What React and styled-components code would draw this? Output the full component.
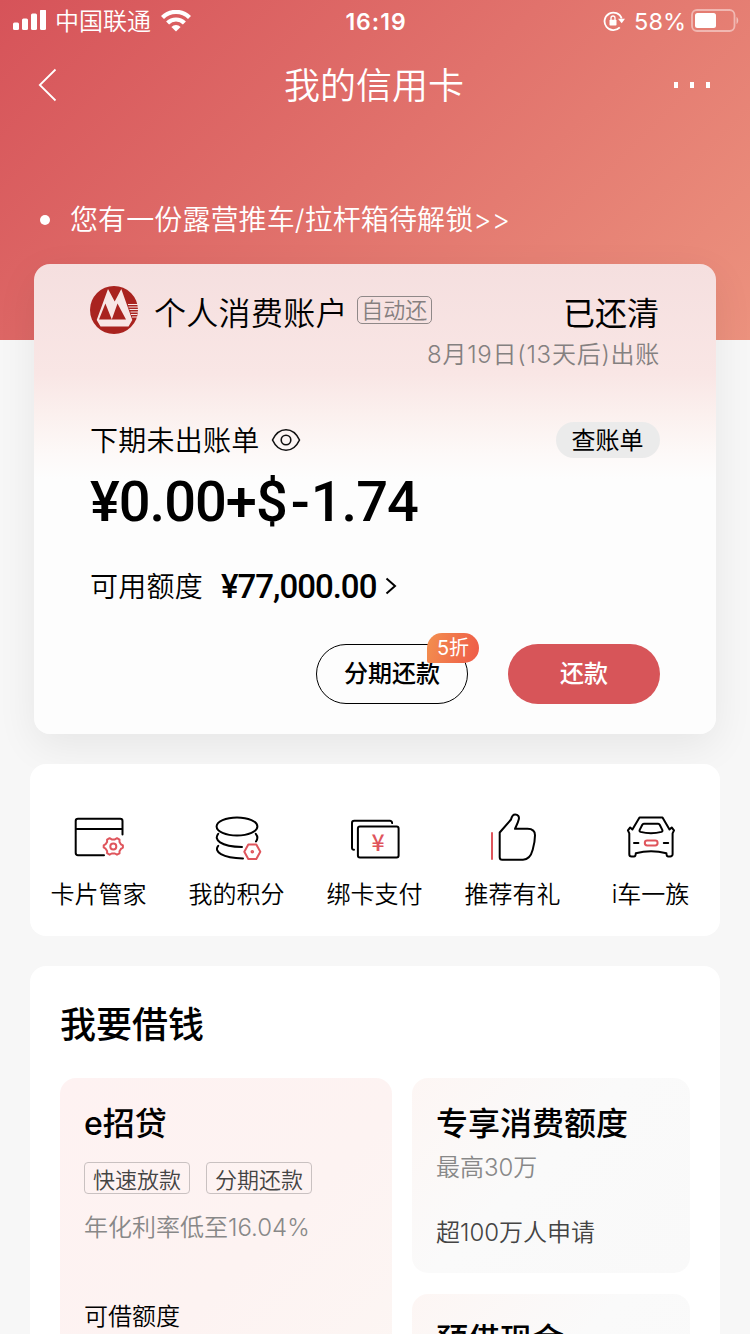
import React from 'react'
import styled, { createGlobalStyle } from 'styled-components'

const GlobalStyle = createGlobalStyle`
    * {
        box-sizing: border-box;
    }
    body {
        margin: 0;
        background: #f7f7f7;
        font-family: Inter, "Noto Sans CJK SC", sans-serif;
        color: #000;
    }
    svg {
        display: block;
        flex: none;
    }
`;

const PageStyled = styled.div`
    width: 750px;
    height: 1334px;
    overflow: hidden;
    background: linear-gradient(135deg, #d65359 0%, #e1726c 50%, #ec927e 100%) no-repeat 0 0 / 100% 340px, #f7f7f7;
`;
const StatusBarStyled = styled.div`
    display: grid;
    grid-template-columns: 1fr auto 1fr;
    height: 40px;
    padding: 0 11px 0 13px;
    align-items: center;
    color: #fff;
`;
const StatusSideStyled = styled.div`
    display: flex;
    align-items: center;
    justify-content: ${({ $end }) => $end ? 'flex-end' : 'flex-start'};
    .carrier {
        margin: 2px 10px 0 9px;
        font-size: 24px;
        line-height: 40px;
        font-weight: 350;
    }
    .percent {
        margin: 1px 5px 0 9px;
        font-size: 23.5px;
        line-height: 40px;
    }
`;
const ClockStyled = styled.div`
    padding-top: 1px;
    font-size: 23px;
    line-height: 40px;
    font-weight: 600;
    letter-spacing: 1px;
`;
const NavBarStyled = styled.div`
    display: grid;
    grid-template-columns: 1fr auto 1fr;
    height: 90px;
    padding: 0 40px 0 38px;
    align-items: center;
    h1 {
        margin: 2px 0 0;
        font-size: 36px;
        line-height: 88px;
        font-weight: 350;
        color: #fff;
    }
`;
const MoreDotsStyled = styled.div`
    display: flex;
    justify-content: flex-end;
    gap: 12px;
    i {
        width: 4px;
        height: 6px;
        background: #fff;
    }
`;
const NoticeStyled = styled.div`
    display: flex;
    height: 134px;
    padding: 46px 0 0 40px;
    align-items: center;
    font-size: 28px;
    line-height: 40px;
    font-weight: 350;
    letter-spacing: 0.1px;
    color: #fff;
    &::before {
        content: '';
        width: 10px;
        height: 10px;
        margin-right: 20px;
        border-radius: 50%;
        background: #fff;
    }
`;

const AccountCardStyled = styled.section`
    height: 470px;
    margin: 0 34px;
    padding: 22px 56px 0;
    border-radius: 16px;
    background: linear-gradient(180deg, #f5dfdf 0, #f9e6e5 110px, #fbf0ee 150px, #fdf9f8 190px, #fdfdfd 215px);
    box-shadow: 0 12px 40px rgba(0, 0, 0, 0.07);
`;
const RowStyled = styled.div`
    display: flex;
    height: ${({ $height }) => $height}px;
    margin-top: ${({ $top }) => $top || 0}px;
    align-items: center;
    justify-content: ${({ $justify }) => $justify || 'flex-start'};
    gap: ${({ $gap }) => $gap || 0}px;
`;
const AccountNameStyled = styled.div`
    margin: 8px 0 0 16px;
    font-size: 32px;
    line-height: 48px;
    font-weight: 350;
    letter-spacing: 0.3px;
`;
const AutoTagStyled = styled.div`
    width: 75px;
    height: 28px;
    margin-left: 9px;
    border: 1px solid #8f8888;
    border-radius: 5px;
    font-size: 22px;
    line-height: 27px;
    font-weight: 350;
    text-align: center;
    color: #857f7f;
`;
const PaidStateStyled = styled.div`
    margin: 8px 1px 0 auto;
    font-size: 32px;
    line-height: 48px;
`;
const BillDateStyled = styled.div`
    padding-top: 2px;
    font-size: 24px;
    font-weight: 350;
    line-height: 40px;
    letter-spacing: 0.75px;
    color: #848080;
`;
const LabelStyled = styled.div`
    margin-top: 2px;
    font-size: 28px;
    line-height: 40px;
    font-weight: 350;
    letter-spacing: 0.25px;
`;
const BillButtonStyled = styled.button`
    width: 104px;
    height: 36px;
    margin-left: auto;
    padding: 1px 1px 0 0;
    border: 0;
    border-radius: 18px;
    background: #ebebeb;
    font: inherit;
    font-size: 24px;
    line-height: 35px;
    color: #000;
`;
const AmountStyled = styled.div`
    font-family: Roboto, sans-serif;
    font-size: 56px;
    line-height: 60px;
    font-weight: 500;
    letter-spacing: -1px;
    .minus {
        margin: 0 2px 0 4px;
    }
`;
const LimitStyled = styled(AmountStyled)`
    margin: 2px 9px 0 18px;
    font-size: 33px;
`;
const ActionButtonStyled = styled.button`
    position: relative;
    width: 152px;
    height: 60px;
    padding: 0;
    border: ${({ $primary }) => $primary ? '0' : '1px solid #000'};
    border-radius: 30px;
    background: ${({ $primary }) => $primary ? '#d75559' : 'transparent'};
    font: inherit;
    font-size: 24px;
    line-height: 58px;
    font-weight: 500;
    color: ${({ $primary }) => $primary ? '#fff' : '#000'};
`;
const DiscountStyled = styled.span`
    position: absolute;
    top: -12px;
    right: -12px;
    width: 52px;
    height: 30px;
    border-radius: 15px 15px 15px 2px;
    background: linear-gradient(105deg, #f3904f, #ee5a48);
    font-size: 20px;
    line-height: 31px;
    font-weight: 400;
    color: #fff;
`;

const MenuStyled = styled.nav`
    display: grid;
    grid-template-columns: repeat(5, 138px);
    height: 172px;
    margin: 30px 30px 0;
    padding-top: 46px;
    border-radius: 16px;
    background: #fff;
`;
const MenuItemStyled = styled.div`
    display: flex;
    flex-direction: column;
    align-items: center;
    font-size: 24px;
    line-height: 36px;
    font-weight: 350;
    span {
        margin: 11px 1px 0 0;
    }
`;

const LoanSectionStyled = styled.section`
    margin: 30px 30px 0;
    padding: 32px 30px 0;
    border-radius: 16px;
    background: #fff;
    h2 {
        height: 80px;
        margin: 0;
        font-size: 36px;
        line-height: 54px;
        font-weight: 500;
    }
`;
const LoanGridStyled = styled.div`
    display: grid;
    grid-template-columns: 332px 278px;
    column-gap: 20px;
    height: 400px;
`;
const LoanColumnStyled = styled.div`
    display: flex;
    flex-direction: column;
    gap: 21px;
`;
const LoanPanelStyled = styled.div`
    height: ${({ $tall }) => $tall ? 400 : 195}px;
    padding: 22px 24px 0;
    border-radius: 16px;
    background: ${({ $tall }) => $tall
        ? 'linear-gradient(135deg, #fef2f2 0%, #fdf3f2 50%, #fcf7f4 100%)'
        : 'linear-gradient(135deg, #fdf6f4 0%, #fafafa 45%, #f9f9f9 100%)'};
    h3 {
        height: 46px;
        margin: 0;
        font-size: 32px;
        line-height: 47px;
        font-weight: 500;
    }
`;
const LoanTextStyled = styled.div`
    margin-top: ${({ $top }) => $top || 0}px;
    font-size: 24px;
    line-height: 36px;
    font-weight: 350;
    color: ${({ $color }) => $color || '#444'};
`;
const TagListStyled = styled.div`
    display: flex;
    margin-top: 16px;
    gap: 16px;
    span {
        width: 106px;
        height: 32px;
        border: 1px solid #c9c1c1;
        border-radius: 4px;
        font-size: 22px;
        line-height: 34px;
        font-weight: 350;
        text-align: center;
        color: #444;
    }
`;

function SignalIcon() {
    return <svg width="33" height="22" viewBox="0 0 33 22" fill="#fff">
        <rect x="0" y="12.5" width="6" height="7.5" rx="1.5" />
        <rect x="9" y="8.5" width="6" height="11.5" rx="1.5" />
        <rect x="18" y="3.5" width="6" height="16.5" rx="1.5" />
        <rect x="27" y="-0.5" width="6" height="20.5" rx="1.5" />
    </svg>
}

function WifiIcon() {
    return <svg width="30" height="22" viewBox="0 0 30 22" fill="none" stroke="#fff" strokeWidth="4.2">
        <path d="M1.500 7.500a19 19 0 0 1 27 0" />
        <path d="M6.600 13a11.800 11.800 0 0 1 16.800 0" />
        <path d="M15 21.500l-4.600-4.600a6.500 6.500 0 0 1 9.200 0z" fill="#fff" stroke="none" />
    </svg>
}

function RotationLockIcon() {
    return <svg width="22" height="22" viewBox="0 0 22 22" fill="none" stroke="#fff" strokeWidth="1.8">
        <path d="M16.800 17.400A8.800 8.800 0 1 1 18.700 8.500" />
        <path d="M15 8.800h7l-3.300 4.400z" fill="#fff" stroke="none" />
        <rect x="6.500" y="9.700" width="7" height="5.800" rx="0.800" fill="#fff" stroke="none" />
        <path d="M8 10.500V8a2 2 0 0 1 4 0v2.500" strokeWidth="1.300" />
    </svg>
}

function BatteryIcon() {
    return <svg width="48" height="24" viewBox="0 0 48 24" fill="none">
        <rect x="1" y="1" width="42.500" height="21" rx="5" stroke="#fff" strokeOpacity="0.450" strokeWidth="1.800" />
        <rect x="4" y="4" width="21" height="15" rx="2.500" fill="#fff" />
        <path d="M45.500 8c2.300 1.200 2.300 5.800 0 7z" fill="#fff" fillOpacity="0.500" />
    </svg>
}

function BankLogo() {
    return <svg width="48" height="48" viewBox="0 0 48 48">
        <circle cx="24" cy="24" r="24" fill="#a9231f" />
        <path d="M18 3L24.700 15.500 31.300 3 42.300 34 38.500 40.500H10.500L6.700 34z" fill="#f8e6e5" />
        <path d="M15.400 17.500L21.800 33.500H9zM27.500 17.500L36 33.500H21.800z" fill="#a9231f" />
        <path d="M38 18.500h10M38.500 21h9.500M39.500 23.500h8.500M40.500 26h7.500M41 28.500h6.500M42 31h5" stroke="#f8e6e5" strokeWidth="1.200" />
    </svg>
}

const EyeIconStyled = styled.svg`
    margin-left: 11px;
`;

function EyeIcon() {
    return <EyeIconStyled width="30" height="24" viewBox="0 0 30 24" fill="none" stroke="#111" strokeWidth="1.6">
        <path d="M1.500 12C4.500 5.500 9 1.700 15 1.700S25.500 5.500 28.500 12C25.500 18.500 21 22.300 15 22.300S4.500 18.500 1.500 12z" />
        <circle cx="15" cy="12" r="4.800" />
    </EyeIconStyled>
}

const MenuIcon = styled.svg.attrs({ viewBox: '0 0 60 56', fill: 'none', strokeWidth: 2, strokeLinecap: 'round', strokeLinejoin: 'round' })`
    width: 60px;
    height: 56px;
    stroke: #000;
    .accent {
        stroke: #df555c;
    }
    text {
        stroke: none;
        fill: #df555c;
        font-family: "Noto Sans CJK SC", sans-serif;
        font-size: 23px;
        font-weight: 500;
        text-anchor: middle;
    }
`;

function CardIcon() {
    return <MenuIcon>
        <path d="M53.500 24.500V11a2.300 2.300 0 0 0-2.300-2.300H9A2.300 2.300 0 0 0 6.700 11v32A2.300 2.300 0 0 0 9 45.200h26M7 19h46" />
        <path className="accent" d="M40.600 28.200l2.100 1.200h3.200l2.100-1.200 2.500 1.500v2.300l1.400 2.300 2 1.100v2.200l-2 1.300-1.400 2.300v2.200L48 44.700l-2.100-1.200h-3.200l-2.100 1.200-2.500-1.500V41l-1.500-2.300-1.900-1.200v-2.200l1.900-1.100 1.500-2.300v-2.300z" />
        <circle className="accent" cx="44.300" cy="36.400" r="3" />
    </MenuIcon>
}

function PointsIcon() {
    return <MenuIcon>
        <ellipse cx="30" cy="16.500" rx="20.400" ry="9" />
        <path d="M11.200 23.800C6.500 29.500 13 36.500 35 37M48.800 23.800C51 26.500 50.800 29 49 31.500M11.200 35.800C6.500 41.500 15 48.200 36 48.400" />
        <path className="accent" d="M37.300 41.800l4-7.300h8l4 7.300-4 7.300h-8z" />
        <circle className="accent" cx="45.300" cy="41.800" r="0.800" />
    </MenuIcon>
}

function PayIcon() {
    return <MenuIcon>
        <path d="M9 39.800A2 2 0 0 1 7 38V13a2.300 2.300 0 0 1 2.300-2.300h35.500a2.300 2.300 0 0 1 2.300 2.400" />
        <rect x="12.900" y="16.600" width="40.700" height="30.800" rx="2" />
        <text x="33" y="40.500">¥</text>
    </MenuIcon>
}

function ThumbIcon() {
    return <MenuIcon>
        <path className="accent" d="M9 23v26" />
        <path d="M16.700 22.500L28 9.500c.7-3 2-5 4.200-5 2.800 0 4.200 2.300 3.600 4.700-.8 3.500-2.300 6.300-3.800 9.600h12.500c5 0 7.500 2.500 7.500 6.500 0 6-1 10-2.300 14.500-1.600 6-4.700 9.900-9.700 9.900H19.200a2.500 2.500 0 0 1-2.500-2.500z" />
    </MenuIcon>
}

function CarIcon() {
    return <MenuIcon>
        <path d="M18.500 7.500h23l7 12 2.200-2 2.300 2.800-1.400 3v20.900a2.300 2.300 0 0 1-2.300 2.300h-2.100q-1.700 0-1.800-3.300Q30 39.500 14.800 43.200 14.700 46.500 13 46.500h-2.400a2.300 2.300 0 0 1-2.300-2.300V23.300l-1.400-3 2.300-2.800 2.200 2z" />
        <path d="M22.800 13.700h14.400q1 0 1.500 1l2.600 5.200q.6 1.500-.8 2-10.500 2.800-21 0-1.400-.5-.8-2l2.600-5.200q.5-1 1.500-1zM13 33h4.400M42.800 33h4.400" />
        <rect className="accent" x="23.800" y="30.600" width="12.800" height="4.800" rx="2.400" />
    </MenuIcon>
}

const MENU = [
    { label: '卡片管家', Icon: CardIcon },
    { label: '我的积分', Icon: PointsIcon },
    { label: '绑卡支付', Icon: PayIcon },
    { label: '推荐有礼', Icon: ThumbIcon },
    { label: 'i车一族', Icon: CarIcon },
];

function StatusBar() {
    return <StatusBarStyled>
        <StatusSideStyled>
            <SignalIcon />
            <span className="carrier">中国联通</span>
            <WifiIcon />
        </StatusSideStyled>
        <ClockStyled>16:19</ClockStyled>
        <StatusSideStyled $end>
            <RotationLockIcon />
            <span className="percent">58%</span>
            <BatteryIcon />
        </StatusSideStyled>
    </StatusBarStyled>
}

function AccountCard() {
    return <AccountCardStyled>
        <RowStyled $height={48}>
            <BankLogo />
            <AccountNameStyled>个人消费账户</AccountNameStyled>
            <AutoTagStyled>自动还</AutoTagStyled>
            <PaidStateStyled>已还清</PaidStateStyled>
        </RowStyled>
        <RowStyled $height={40} $justify="flex-end">
            <BillDateStyled>8月19日(13天后)出账</BillDateStyled>
        </RowStyled>
        <RowStyled $height={40} $top={46}>
            <LabelStyled>下期未出账单</LabelStyled>
            <EyeIcon />
            <BillButtonStyled>查账单</BillButtonStyled>
        </RowStyled>
        <RowStyled $height={84}>
            <AmountStyled>¥0.00+$<span className="minus">-</span>1.74</AmountStyled>
        </RowStyled>
        <RowStyled $height={84}>
            <LabelStyled>可用额度</LabelStyled>
            <LimitStyled>¥77,000.00</LimitStyled>
            <svg width="12" height="18" viewBox="0 0 12 18" fill="none" stroke="#000" strokeWidth="2">
                <path d="M1.500 1.500L10 9l-8.500 7.500" />
            </svg>
        </RowStyled>
        <RowStyled $height={60} $top={16} $justify="flex-end" $gap={40}>
            <ActionButtonStyled>
                分期还款
                <DiscountStyled>5折</DiscountStyled>
            </ActionButtonStyled>
            <ActionButtonStyled $primary>还款</ActionButtonStyled>
        </RowStyled>
    </AccountCardStyled>
}

export default function App() {
    return <PageStyled>
        <GlobalStyle />
        <StatusBar />
        <NavBarStyled>
            <svg width="20" height="34" viewBox="0 0 20 34" fill="none" stroke="#fff" strokeWidth="1.8">
                <path d="M17.500 1.500L1.800 17l15.700 15.500" />
            </svg>
            <h1>我的信用卡</h1>
            <MoreDotsStyled><i /><i /><i /></MoreDotsStyled>
        </NavBarStyled>
        <NoticeStyled>您有一份露营推车/拉杆箱待解锁&gt;&gt;</NoticeStyled>
        <AccountCard />
        <MenuStyled>
            {MENU.map(({ label, Icon }) => (
                <MenuItemStyled key={label}>
                    <Icon />
                    <span>{label}</span>
                </MenuItemStyled>
            ))}
        </MenuStyled>
        <LoanSectionStyled>
            <h2>我要借钱</h2>
            <LoanGridStyled>
                <LoanPanelStyled $tall>
                    <h3>e招贷</h3>
                    <TagListStyled>
                        <span>快速放款</span>
                        <span>分期还款</span>
                    </TagListStyled>
                    <LoanTextStyled $top={16} $color="#888">年化利率低至16.04%</LoanTextStyled>
                    <LoanTextStyled $top={53} $color="#000">可借额度</LoanTextStyled>
                </LoanPanelStyled>
                <LoanColumnStyled>
                    <LoanPanelStyled>
                        <h3>专享消费额度</h3>
                        <LoanTextStyled $top={4} $color="#888">最高30万</LoanTextStyled>
                        <LoanTextStyled $top={29}>超100万人申请</LoanTextStyled>
                    </LoanPanelStyled>
                    <LoanPanelStyled>
                        <h3>预借现金</h3>
                    </LoanPanelStyled>
                </LoanColumnStyled>
            </LoanGridStyled>
        </LoanSectionStyled>
    </PageStyled>
}
